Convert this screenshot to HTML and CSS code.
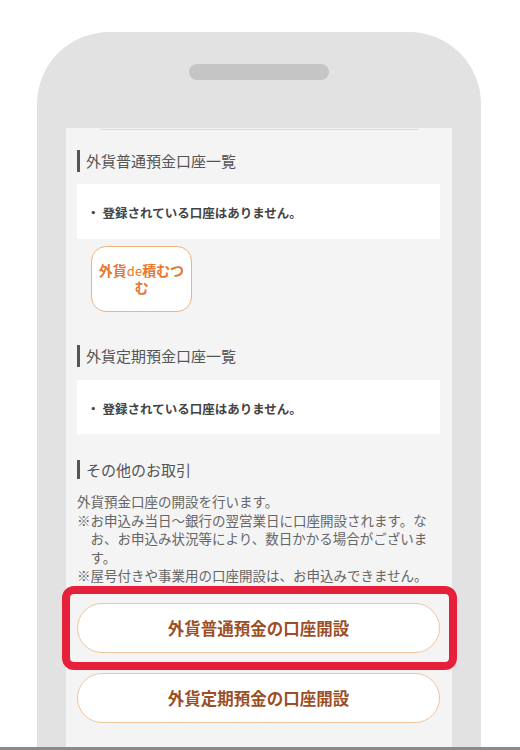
FILE: index.html
```html
<!DOCTYPE html>
<html lang="ja">
<head>
<meta charset="utf-8">
<title>外貨預金口座</title>
<link rel="stylesheet" href="styles.css">
</head>
<body>
<div class="page">
  <div class="phone">
    <div class="speaker"></div>
    <div class="screen">
      <div class="cut"></div>

      <h2 class="heading">外貨普通預金口座一覧</h2>
      <div class="panel">
        <p class="empty"><span class="dot">・</span>登録されている口座はありません。</p>
      </div>
      <a class="tsumu"><span class="tsumu-label">外貨<span class="de">de</span>積むつむ</span></a>

      <h2 class="heading heading-2">外貨定期預金口座一覧</h2>
      <div class="panel panel-2">
        <p class="empty"><span class="dot">・</span>登録されている口座はありません。</p>
      </div>

      <h2 class="heading heading-3">その他のお取引</h2>
      <div class="notes">
        <p class="lead">外貨預金口座の開設を行います。</p>
        <p class="note">※お申込み当日〜銀行の翌営業日に口座開設されます。なお、お申込み状況等により、数日かかる場合がございます。</p>
        <p class="note">※屋号付きや事業用の口座開設は、お申込みできません。</p>
      </div>

      <div class="btn-wrap highlighted">
        <a class="pill">外貨普通預金の口座開設</a>
      </div>
      <div class="btn-wrap second">
        <a class="pill">外貨定期預金の口座開設</a>
      </div>
    </div>
  </div>
  <div class="baseline"></div>
</div>
</body>
</html>
```

FILE: styles.css
```css
html, body {
  margin: 0;
  padding: 0;
  height: 750px;
  overflow: hidden;
  background: #ffffff;
  font-family: "Noto Sans CJK JP", "Noto Sans", sans-serif;
}

.page {
  display: flex;
  flex-direction: column;
  height: 750px;
}

.phone {
  margin: 32px 0 0 37px;
  width: 444px;
  height: 715px;
  background: #e2e2e2;
  border-radius: 72px 72px 0 0;
  display: flex;
  flex-direction: column;
  align-items: center;
}

.speaker {
  margin-top: 32px;
  width: 140px;
  height: 16px;
  border-radius: 8px;
  background: #c5c5c5;
  flex: none;
}

.screen {
  margin-top: 48px;
  width: 386px;
  flex: 1;
  background: #f4f4f4;
  box-sizing: border-box;
  padding: 0 12px 0 11px;
  display: flex;
  flex-direction: column;
}

.cut {
  height: 2px;
  margin: 0 21px 0 23px;
  border-bottom: 1px solid #f6d3b4;
  border-radius: 0 0 8px 8px;
  box-sizing: border-box;
}

.heading {
  margin: 19px 0 0;
  height: 23px;
  display: flex;
  align-items: center;
  gap: 6px;
  font-size: 15px;
  line-height: 23px;
  font-weight: 400;
  color: #555555;
}

.heading::before {
  content: "";
  width: 3px;
  height: 22px;
  background: #555555;
  flex: none;
}

.heading-2 { margin-top: 32px; }
.heading-3 { margin-top: 24px; }
.heading-3::before { height: 19px; }

.panel {
  margin-top: 12px;
  background: #ffffff;
  height: 55px;
  box-sizing: border-box;
  padding: 20px 10px 0;
}

.panel-2 {
  margin-top: 13px;
  height: 54px;
}

.empty {
  margin: 0;
  font-size: 12.5px;
  line-height: 18px;
  font-weight: 700;
  color: #444444;
  display: flex;
}

.dot {
  margin-right: 3px;
}

.tsumu {
  margin: 7px 0 0 14px;
  width: 101px;
  height: 66px;
  box-sizing: border-box;
  border: 1.5px solid #f1b27c;
  border-radius: 15px;
  background: #ffffff;
  padding: 0 5px;
  display: flex;
  align-items: center;
  justify-content: center;
}

.tsumu-label {
  display: block;
  text-align: center;
  font-size: 14px;
  line-height: 17px;
  font-weight: 700;
  color: #e9772f;
}

.de {
  font-size: 13px;
  font-weight: 400;
}

.notes {
  margin-top: 11px;
  font-size: 13.5px;
  line-height: 18.5px;
  color: #666666;
}

.notes p {
  margin: 0;
}

.note {
  padding-left: 1em;
  text-indent: -1em;
}

.btn-wrap {
  position: relative;
  margin-top: 18px;
}

.btn-wrap.second {
  margin-top: 20px;
}

.highlighted::after {
  content: "";
  position: absolute;
  top: -17px;
  bottom: -17px;
  left: -15px;
  right: -17px;
  border: 8px solid #e61f3b;
  border-radius: 12px;
  pointer-events: none;
}

.pill {
  display: flex;
  align-items: center;
  justify-content: center;
  height: 50px;
  box-sizing: border-box;
  border: 1.5px solid #efc59f;
  border-radius: 25px;
  background: #ffffff;
  font-size: 16.5px;
  font-weight: 700;
  color: #9c4f26;
}

.baseline {
  height: 3px;
  background: #8a8a8a;
  flex: none;
}
```
